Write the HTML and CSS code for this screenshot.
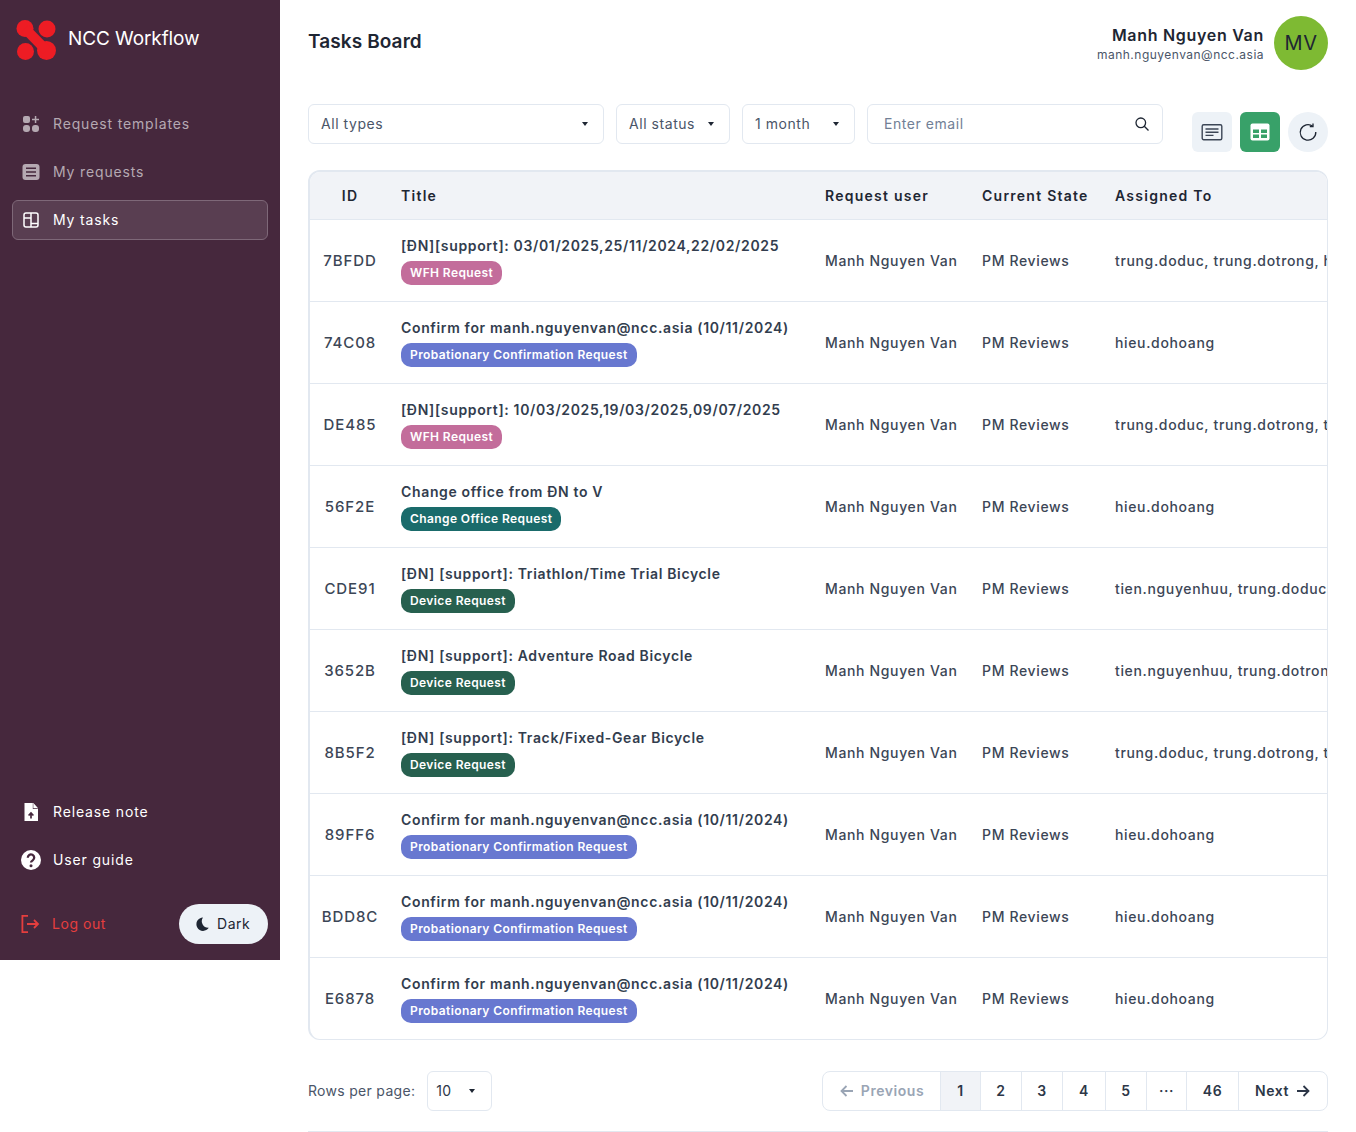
FILE: index.html
```html
<!DOCTYPE html>
<html lang="en">
<head>
  <meta charset="UTF-8" />
  <meta name="viewport" content="width=device-width, initial-scale=1.0"/>
  <title>Tasks Board</title>
  <link rel="stylesheet" href="styles.css">
</head>
<body>
  <div class="layout">
    <!-- SIDEBAR -->
    <aside class="sidebar">
      <div class="brand">
        <svg class="logo" width="40" height="40" viewBox="0 0 40 40">
          <g fill="#ed1c24">
            <circle cx="9" cy="8.500" r="8.500"/>
            <circle cx="31" cy="9" r="8.500"/>
            <circle cx="9.500" cy="31.500" r="8.500"/>
            <circle cx="30.500" cy="30.500" r="9.500"/>
          </g>
          <path d="M9 8.500 L30.500 30.500" stroke="#ed1c24" stroke-width="10" fill="none"/>
        </svg>
        <span class="brand-name">NCC Workflow</span>
      </div>

      <nav class="nav">
        <a class="nav-item">
          <svg width="20" height="20" viewBox="0 0 20 20" fill="#b5a9b2"><rect x="2" y="2" width="7" height="7" rx="2"/><rect x="2" y="11" width="7" height="7" rx="3"/><rect x="11" y="11" width="7" height="7" rx="3"/><path d="M13.800 2h1.500v2.700H18v1.500h-2.700V9h-1.500V6.200H11V4.700h2.800z"/></svg>
          Request templates
        </a>
        <a class="nav-item">
          <svg width="20" height="20" viewBox="0 0 20 20"><rect x="1.500" y="2" width="17" height="16" rx="3" fill="#b5a9b2"/><path d="M5 6.300h10M5 10h10M5 13.700h10" stroke="#46283d" stroke-width="1.500"/></svg>
          My requests
        </a>
        <a class="nav-item active">
          <svg width="20" height="20" viewBox="0 0 20 20" fill="none" stroke="#fff" stroke-width="1.500"><rect x="3" y="3" width="14" height="14" rx="2"/><path d="M10 3v14M3 8h7M10 13.500h7"/></svg>
          My tasks
        </a>
      </nav>

      <div class="nav nav-bottom">
        <a class="nav-item light">
          <svg width="20" height="20" viewBox="0 0 20 20"><path d="M3.500 1h8.500l5 5.500V19H3.500z" fill="#fff"/><path d="M11.800 1v6h5.400z" fill="#46283d"/><path d="M12.300 1l4.700 5.200h-4.700z" fill="#fff"/><path d="M10 16.500v-5M7.600 13.500l2.400-2.500 2.400 2.500" stroke="#46283d" stroke-width="1.700" fill="none"/></svg>
          Release note
        </a>
        <a class="nav-item light">
          <svg width="20" height="20" viewBox="0 0 20 20"><circle cx="10" cy="10" r="10" fill="#fff"/><path d="M6.800 7.800a3.200 3.200 0 1 1 5 2.500c-1.100.700-1.800 1.100-1.800 2.200" stroke="#46283d" stroke-width="2.300" fill="none"/><circle cx="10" cy="15.700" r="1.500" fill="#46283d"/></svg>
          User guide
        </a>
      </div>

      <div class="sidebar-foot">
        <a class="logout">
          <svg width="20" height="20" viewBox="0 0 20 20" fill="none" stroke="#e53e3e" stroke-width="1.800"><path d="M8 1.900H2.400v16.200H8M7 10h11M14 6l4 4-4 4"/></svg>
          Log out
        </a>
        <button class="theme-btn">
          <svg width="16" height="16" viewBox="0 0 16 16"><path d="M9 1.500a6.700 6.700 0 1 0 5.800 10.200A6.500 6.500 0 0 1 9 1.500z" fill="#1e2633"/></svg>
          Dark
        </button>
      </div>
    </aside>

    <!-- MAIN -->
    <main class="main">
      <header class="topbar">
        <h1>Tasks Board</h1>
        <div class="user">
          <div class="user-info">
            <div class="user-name">Manh Nguyen Van</div>
            <div class="user-mail">manh.nguyenvan@ncc.asia</div>
          </div>
          <div class="avatar">MV</div>
        </div>
      </header>

      <div class="toolbar">
        <div class="select w-wide">All types<span class="caret"></span></div>
        <div class="select w-status">All status<span class="caret"></span></div>
        <div class="select w-month">1 month<span class="caret"></span></div>
        <div class="select w-wide search">
          <span class="placeholder">Enter email</span>
          <svg width="16" height="16" viewBox="0 0 16 16" fill="none" stroke="#1e2633" stroke-width="1.300"><circle cx="6.800" cy="6.800" r="4.800"/><path d="M10.300 10.300L14.500 14.500"/></svg>
        </div>
        <div class="view-btns">
          <button class="view-btn">
            <svg width="22" height="18" viewBox="0 0 22 18" fill="none" stroke="#3c4656" stroke-width="1.400"><rect x="1.200" y="1.700" width="19.600" height="15" rx="1.500"/><path d="M4.500 6h13M4.500 9.200h13M4.500 12.400h8"/></svg>
          </button>
          <button class="view-btn on">
            <svg width="22" height="20" viewBox="0 0 22 20"><rect x="1.500" y="1.500" width="19" height="17" rx="2" fill="#fff"/><path d="M4 7.500h6v3.500H4zM12 7.500h6v3.500h-6zM4 12.500h6V16H4zM12 12.500h6V16h-6z" fill="#38a169"/></svg>
          </button>
          <button class="view-btn round">
            <svg width="20" height="20" viewBox="0 0 20 20" fill="none" stroke="#1e2633" stroke-width="1.300"><path d="M14.800 4.200A7.800 7.800 0 1 0 17.800 10"/><path d="M15 1.500v3.200h-3.200"/></svg>
          </button>
        </div>
      </div>

      <div class="table-wrap">
        <table class="tasks">
          <colgroup>
            <col class="c-id"><col class="c-title"><col class="c-user"><col class="c-state"><col class="c-assign">
          </colgroup>
          <thead>
            <tr><th class="id">ID</th><th>Title</th><th>Request user</th><th>Current State</th><th>Assigned To</th></tr>
          </thead>
          <tbody>
            <tr>
              <td class="id">7BFDD</td>
              <td><div class="t">[ĐN][support]: 03/01/2025,25/11/2024,22/02/2025</div><span class="tag wfh">WFH Request</span></td>
              <td>Manh Nguyen Van</td><td>PM Reviews</td><td>trung.doduc, trung.dotrong, hieu.dohoang</td>
            </tr>
            <tr>
              <td class="id">74C08</td>
              <td><div class="t">Confirm for manh.nguyenvan@ncc.asia (10/11/2024)</div><span class="tag prob">Probationary Confirmation Request</span></td>
              <td>Manh Nguyen Van</td><td>PM Reviews</td><td>hieu.dohoang</td>
            </tr>
            <tr>
              <td class="id">DE485</td>
              <td><div class="t">[ĐN][support]: 10/03/2025,19/03/2025,09/07/2025</div><span class="tag wfh">WFH Request</span></td>
              <td>Manh Nguyen Van</td><td>PM Reviews</td><td>trung.doduc, trung.dotrong, tien.nguyenhuu</td>
            </tr>
            <tr>
              <td class="id">56F2E</td>
              <td><div class="t">Change office from ĐN to V</div><span class="tag office">Change Office Request</span></td>
              <td>Manh Nguyen Van</td><td>PM Reviews</td><td>hieu.dohoang</td>
            </tr>
            <tr>
              <td class="id">CDE91</td>
              <td><div class="t">[ĐN] [support]: Triathlon/Time Trial Bicycle</div><span class="tag device">Device Request</span></td>
              <td>Manh Nguyen Van</td><td>PM Reviews</td><td>tien.nguyenhuu, trung.doduc, trung.dotrong</td>
            </tr>
            <tr>
              <td class="id">3652B</td>
              <td><div class="t">[ĐN] [support]: Adventure Road Bicycle</div><span class="tag device">Device Request</span></td>
              <td>Manh Nguyen Van</td><td>PM Reviews</td><td>tien.nguyenhuu, trung.dotrong, trung.doduc</td>
            </tr>
            <tr>
              <td class="id">8B5F2</td>
              <td><div class="t">[ĐN] [support]: Track/Fixed-Gear Bicycle</div><span class="tag device">Device Request</span></td>
              <td>Manh Nguyen Van</td><td>PM Reviews</td><td>trung.doduc, trung.dotrong, tien.nguyenhuu</td>
            </tr>
            <tr>
              <td class="id">89FF6</td>
              <td><div class="t">Confirm for manh.nguyenvan@ncc.asia (10/11/2024)</div><span class="tag prob">Probationary Confirmation Request</span></td>
              <td>Manh Nguyen Van</td><td>PM Reviews</td><td>hieu.dohoang</td>
            </tr>
            <tr>
              <td class="id">BDD8C</td>
              <td><div class="t">Confirm for manh.nguyenvan@ncc.asia (10/11/2024)</div><span class="tag prob">Probationary Confirmation Request</span></td>
              <td>Manh Nguyen Van</td><td>PM Reviews</td><td>hieu.dohoang</td>
            </tr>
            <tr>
              <td class="id">E6878</td>
              <td><div class="t">Confirm for manh.nguyenvan@ncc.asia (10/11/2024)</div><span class="tag prob">Probationary Confirmation Request</span></td>
              <td>Manh Nguyen Van</td><td>PM Reviews</td><td>hieu.dohoang</td>
            </tr>
          </tbody>
        </table>
      </div>

      <div class="table-foot">
        <div class="rows">
          <span class="rows-label">Rows per page:</span>
          <div class="select w-rows">10<span class="caret"></span></div>
        </div>
        <div class="pager">
          <a class="disabled">
            <svg width="16" height="16" viewBox="0 0 16 16" fill="none" stroke="currentColor" stroke-width="1.800"><path d="M14 8H2.500M7.500 3L2.500 8l5 5"/></svg>
            Previous
          </a>
          <a class="current">1</a><a>2</a><a>3</a><a>4</a><a>5</a><a>···</a><a>46</a>
          <a>
            Next
            <svg width="16" height="16" viewBox="0 0 16 16" fill="none" stroke="currentColor" stroke-width="1.800"><path d="M2 8h11.500M8.500 3l5 5-5 5"/></svg>
          </a>
        </div>
      </div>
    </main>
  </div>
</body>
</html>
```

FILE: styles.css
```css
* {
  box-sizing: border-box;
}
body {
  margin: 0;
  font-family: Inter, "Noto Sans", sans-serif;
  font-size: 14px;
  letter-spacing: 0.55px;
  color: #2d3748;
  background: #fff;
}
.layout {
  display: flex;
  align-items: flex-start;
}

/* sidebar */
.sidebar {
  flex: 0 0 280px;
  height: 960px;
  background: #46283d;
  padding: 0 12px 16px;
  display: flex;
  flex-direction: column;
  color: #fff;
}
.brand {
  display: flex;
  gap: 12px;
  padding: 20px 4px 0;
  height: 100px;
  align-items: flex-start;
}
.brand-name {
  font-size: 19px;
  line-height: 38px;
  letter-spacing: -0.1px;
  color: #fff;
}
.nav {
  display: flex;
  flex-direction: column;
  gap: 8px;
  margin-top: 4px;
}
.nav-bottom {
  margin-top: auto;
}
.nav-item {
  display: flex;
  align-items: center;
  gap: 12px;
  height: 40px;
  padding: 0 9px 2px 8px;
  border: 1px solid transparent;
  border-radius: 6px;
  letter-spacing: 0.85px;
  color: #b5a9b2;
}
.nav-item svg {
  margin-top: 2px;
}
.nav-item.active {
  background: #593e51;
  border-color: #7e6878;
  color: #fff;
}
.nav-item.light {
  color: #fff;
}
.sidebar-foot {
  display: flex;
  align-items: center;
  justify-content: space-between;
  margin-top: 24px;
}
.logout {
  display: flex;
  align-items: center;
  gap: 12px;
  padding: 0 0 2px 8px;
  color: #e53e3e;
}
.logout svg {
  margin-top: 2px;
}
.theme-btn {
  display: flex;
  align-items: center;
  gap: 7px;
  width: 89px;
  height: 40px;
  padding: 0 0 2px 15px;
  border: none;
  border-radius: 20px;
  background: #edf2f7;
  color: #1e2633;
  font: inherit;
  letter-spacing: inherit;
}
.theme-btn svg {
  margin-top: 2px;
}

/* main */
.main {
  flex: 1;
  min-width: 0;
  padding: 16px 28px 0;
}
.topbar {
  display: flex;
  justify-content: space-between;
  align-items: center;
  height: 54px;
}
h1 {
  margin: 0 0 3px;
  font-size: 19px;
  font-weight: 600;
  letter-spacing: 0.1px;
  color: #1e2633;
}
.user {
  display: flex;
  align-items: center;
  gap: 10px;
}
.user-info {
  padding-top: 2px;
  text-align: right;
}
.user-name {
  font-size: 16px;
  font-weight: 600;
  letter-spacing: 0.7px;
  line-height: 22px;
  color: #1e2633;
}
.user-mail {
  font-size: 12px;
  letter-spacing: 0.48px;
  line-height: 18px;
  color: #4a5568;
}
.avatar {
  width: 54px;
  height: 54px;
  border-radius: 50%;
  background: #7eba33;
  color: #1e2633;
  font-size: 20px;
  display: flex;
  align-items: center;
  justify-content: center;
}

.toolbar {
  display: flex;
  align-items: flex-start;
  gap: 12px;
  margin-top: 34px;
}
.select {
  display: flex;
  align-items: center;
  justify-content: space-between;
  height: 40px;
  padding: 0 15px 2px 12px;
  border: 1px solid #e2e8f0;
  border-radius: 6px;
  color: #4a5568;
  background: #fff;
}
.caret {
  margin-top: 2px;
  width: 0;
  height: 0;
  border-left: 3.500px solid transparent;
  border-right: 3.500px solid transparent;
  border-top: 4px solid #1e2633;
}
.w-wide {
  width: 296px;
}
.w-status {
  width: 114px;
}
.w-month {
  width: 113px;
}
.w-rows {
  width: 65px;
  padding-left: 8px;
  padding-right: 16px;
  margin-left: 12px;
  color: #2d3748;
}
.search {
  padding-left: 16px;
  padding-right: 12px;
}
.search svg {
  margin-top: 2px;
}
.placeholder {
  color: #718096;
}
.view-btns {
  display: flex;
  gap: 8px;
  margin-left: 17px;
  margin-top: 8px;
}
.view-btn {
  width: 40px;
  height: 40px;
  border: none;
  padding: 0;
  border-radius: 6px;
  background: #edf2f7;
  display: flex;
  align-items: center;
  justify-content: center;
}
.view-btn.on {
  background: #38a169;
}
.view-btn.round {
  border-radius: 50%;
}

/* table */
.table-wrap {
  margin-top: 18px;
  width: 1020px;
  border: 1px solid #e2e8f0;
  border-top-width: 2px;
  border-left-width: 2px;
  border-radius: 12px;
  overflow: hidden;
}
.tasks {
  border-collapse: collapse;
  table-layout: fixed;
  width: 1100px;
}
.c-id {
  width: 78px;
}
.c-title {
  width: 424px;
}
.c-user {
  width: 157px;
}
.c-state {
  width: 133px;
}
.c-assign {
  width: 308px;
}
.tasks th {
  height: 47px;
  padding: 0 13px;
  background: #f1f3f7;
  border-bottom: 1px solid #e2e8f0;
  text-align: left;
  font-weight: 600;
  letter-spacing: 1.25px;
  color: #1e2633;
}
.tasks td {
  height: 82px;
  padding: 0 13px;
  border-bottom: 1px solid #e2e8f0;
  white-space: nowrap;
  overflow: hidden;
  color: #3c4656;
  font-weight: 500;
  letter-spacing: 0.65px;
}
.tasks td:nth-child(2) {
  padding-top: 1px;
}
.tasks tr:last-child td {
  border-bottom: none;
}
.tasks th.id,
.tasks td.id {
  text-align: center;
  padding: 0 0 0 2px;
}
.tasks td.id {
  font-size: 15px;
  letter-spacing: 0.9px;
}
.t {
  font-weight: 600;
  line-height: 20px;
  margin-bottom: 5px;
  letter-spacing: 0.65px;
  color: #323d4e;
}
.tag {
  display: inline-block;
  height: 24px;
  line-height: 24px;
  padding: 0 9px;
  border-radius: 10px;
  font-size: 12px;
  font-weight: 600;
  letter-spacing: 0.4px;
  color: #fff;
}
.wfh {
  background: #c36d9b;
}
.prob {
  background: #6878d0;
}
.office {
  background: #1a6b6b;
}
.device {
  background: #27604f;
}

/* footer */
.table-foot {
  display: flex;
  justify-content: space-between;
  align-items: center;
  margin-top: 31px;
  padding-bottom: 20px;
  border-bottom: 1px solid #e2e8f0;
}
.rows {
  display: flex;
  align-items: center;
  letter-spacing: 0.3px;
  color: #4a5568;
}
.rows-label {
  margin-bottom: 2px;
}
.pager {
  display: grid;
  grid-template-columns: 117px 40px 41px 41px 43px 41px 40px 52px 89px;
  height: 40px;
  border: 1px solid #e2e8f0;
  border-radius: 8px;
  overflow: hidden;
  font-weight: 600;
}
.pager a {
  display: flex;
  align-items: center;
  justify-content: center;
  gap: 6px;
  padding-bottom: 2px;
  border-left: 1px solid #e2e8f0;
  color: #2d3748;
}
.pager a svg {
  margin-top: 2px;
}
.pager a:first-child {
  border-left: none;
}
.pager a.disabled {
  color: #9aa5b5;
}
.pager a.current {
  background: #f1f3f7;
}
```
